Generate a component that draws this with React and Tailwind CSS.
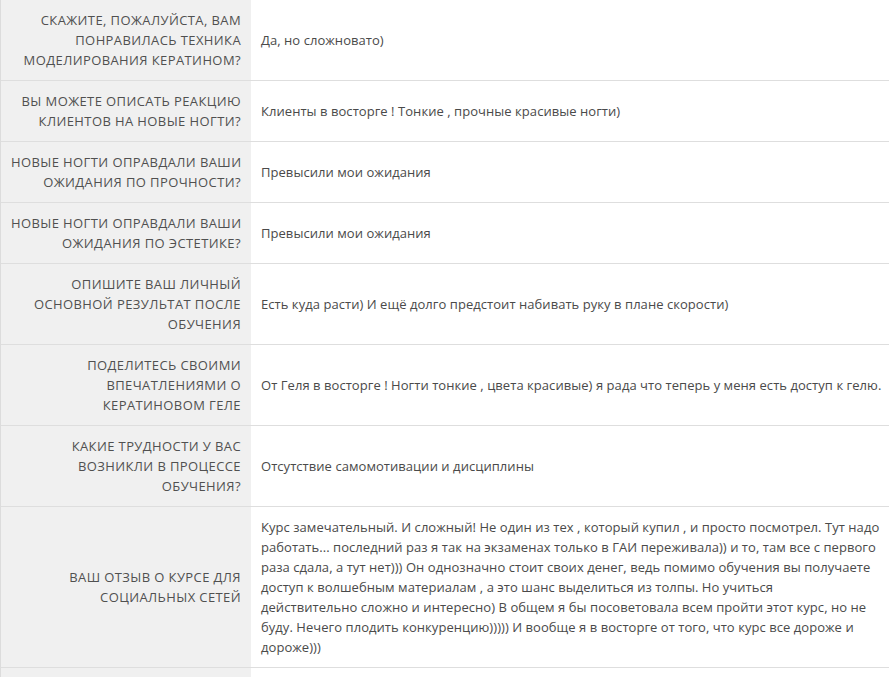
const rows = [
  {
    q: ["СКАЖИТЕ, ПОЖАЛУЙСТА, ВАМ", "ПОНРАВИЛАСЬ ТЕХНИКА", "МОДЕЛИРОВАНИЯ КЕРАТИНОМ?"],
    a: ["Да, но сложновато)"],
  },
  {
    q: ["ВЫ МОЖЕТЕ ОПИСАТЬ РЕАКЦИЮ", "КЛИЕНТОВ НА НОВЫЕ НОГТИ?"],
    a: ["Клиенты в восторге ! Тонкие , прочные красивые ногти)"],
  },
  {
    q: ["НОВЫЕ НОГТИ ОПРАВДАЛИ ВАШИ", "ОЖИДАНИЯ ПО ПРОЧНОСТИ?"],
    a: ["Превысили мои ожидания"],
  },
  {
    q: ["НОВЫЕ НОГТИ ОПРАВДАЛИ ВАШИ", "ОЖИДАНИЯ ПО ЭСТЕТИКЕ?"],
    a: ["Превысили мои ожидания"],
  },
  {
    q: ["ОПИШИТЕ ВАШ ЛИЧНЫЙ", "ОСНОВНОЙ РЕЗУЛЬТАТ ПОСЛЕ", "ОБУЧЕНИЯ"],
    a: ["Есть куда расти) И ещё долго предстоит набивать руку в плане скорости)"],
  },
  {
    q: ["ПОДЕЛИТЕСЬ СВОИМИ", "ВПЕЧАТЛЕНИЯМИ О", "КЕРАТИНОВОМ ГЕЛЕ"],
    a: ["От Геля в восторге ! Ногти тонкие , цвета красивые) я рада что теперь у меня есть доступ к гелю."],
  },
  {
    q: ["КАКИЕ ТРУДНОСТИ У ВАС", "ВОЗНИКЛИ В ПРОЦЕССЕ", "ОБУЧЕНИЯ?"],
    a: ["Отсутствие самомотивации и дисциплины"],
  },
  {
    q: ["ВАШ ОТЗЫВ О КУРСЕ ДЛЯ", "СОЦИАЛЬНЫХ СЕТЕЙ"],
    a: [
      "Курс замечательный. И сложный! Не один из тех , который купил , и просто посмотрел. Тут надо",
      "работать... последний раз я так на экзаменах только в ГАИ переживала)) и то, там все с первого",
      "раза сдала, а тут нет))) Он однозначно стоит своих денег, ведь помимо обучения вы получаете",
      "доступ к волшебным материалам , а это шанс выделиться из толпы. Но учиться",
      "действительно сложно и интересно) В общем я бы посоветовала всем пройти этот курс, но не",
      "буду. Нечего плодить конкуренцию))))) И вообще я в восторге от того, что курс все дороже и",
      "дороже)))",
    ],
  },
  { q: [""], a: [""] },
];

const App = () => {
  return (
    <div className="min-h-screen bg-white font-['Open_Sans',sans-serif] text-[13px] leading-[20px] text-[#4a4a4a]">
      <div className="w-[920px] border-l border-[#dcdcdc]">
        {rows.map((row, index) => (
          <div
            key={index}
            className={`flex ${index > 0 ? "border-t border-[#dedede]" : ""}`}
          >
            <div className="w-[250px] shrink-0 bg-[#f0f0f0] px-[10px] py-[10px] text-right tracking-[0.4px] text-[#505050] flex flex-col justify-center">
              {row.q.map((line, i) => (
                <div key={i} className="whitespace-nowrap min-h-[20px]">
                  {line}
                </div>
              ))}
            </div>
            <div className="flex-1 px-[10px] py-[10px] tracking-[0.05px] flex flex-col justify-center">
              {row.a.map((line, i) => (
                <div key={i} className="whitespace-nowrap min-h-[20px]">
                  {line}
                </div>
              ))}
            </div>
          </div>
        ))}
      </div>
    </div>
  );
};

export default App;
